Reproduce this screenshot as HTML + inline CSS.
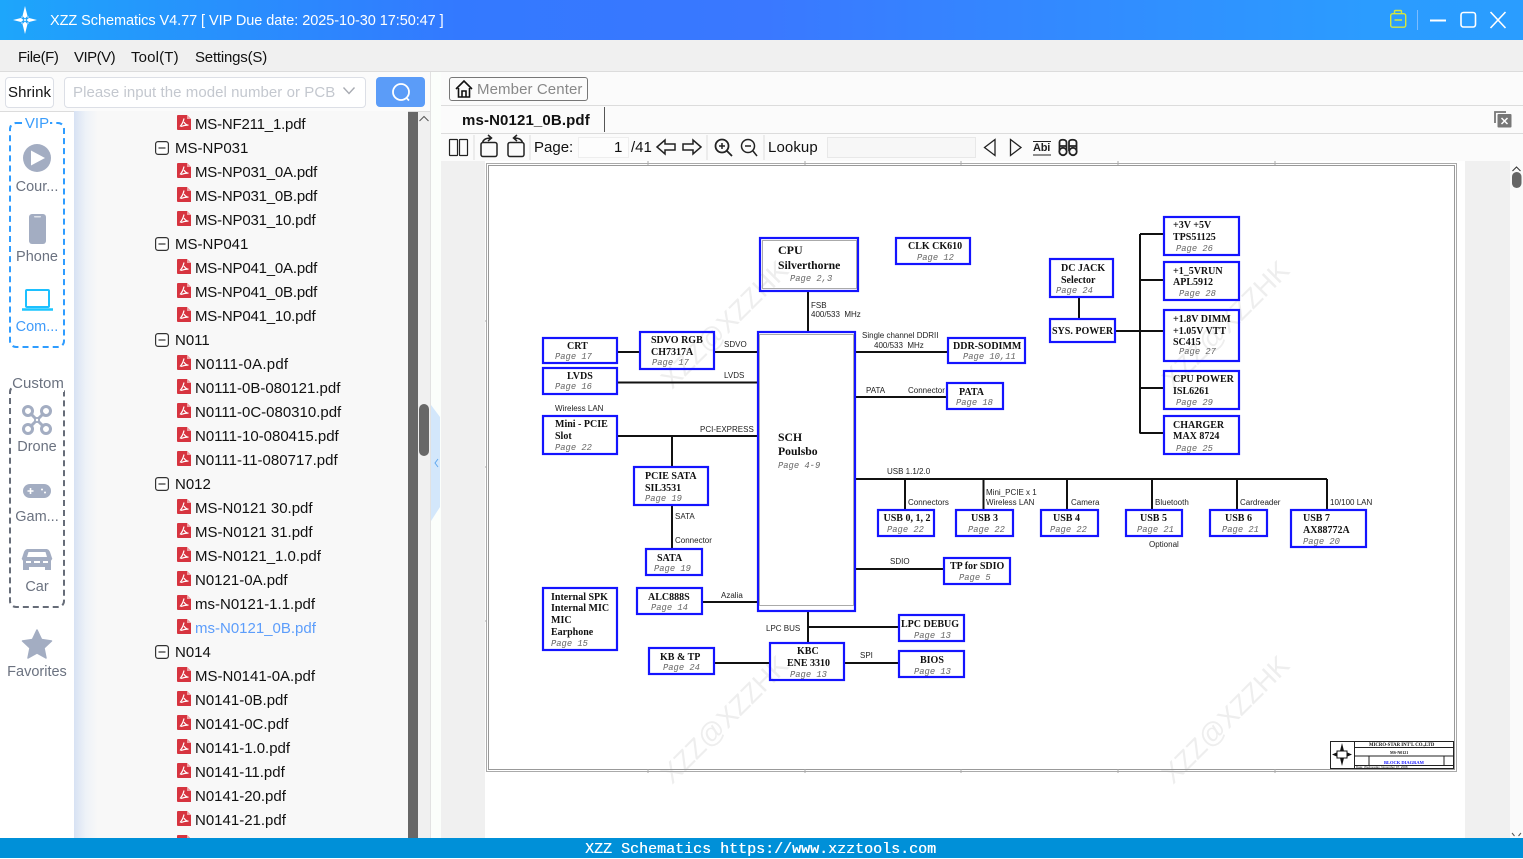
<!DOCTYPE html>
<html><head><meta charset="utf-8"><title>XZZ Schematics</title>
<style>
html,body{margin:0;padding:0;width:1523px;height:858px;overflow:hidden;background:#fff;font-family:"Liberation Sans","Noto Sans CJK SC",sans-serif;color:#111}
.a{position:absolute}
.t{position:absolute;white-space:nowrap;line-height:18px;font-size:15px}
.c{position:absolute;left:0;width:74px;text-align:center;font-size:14.5px;line-height:18px;color:#6b7280;white-space:nowrap}
#tree{position:absolute;left:74px;top:111px;width:334px;height:727px;overflow:hidden;background:linear-gradient(90deg,#d7e2f3 0,#eef2f8 12px,#f8f8f8 24px)}
#tree div{height:24px;line-height:27px;font-size:15px;white-space:nowrap;position:relative}
#tree .f{padding-left:121px}
#tree .d{padding-left:101px}
#tree .f svg{position:absolute;left:103px;top:4px}
#tree .d svg{position:absolute;left:81px;top:6px}
#tree .m{letter-spacing:-.2px}
#sch text{white-space:pre}
.b{font:bold 10px "Liberation Serif",serif;fill:#111}
.p{font:italic 8.8px "Liberation Mono",monospace;fill:#666}
.l{font:8px "Liberation Sans",sans-serif;fill:#222}
.w{font:27px "Liberation Sans",sans-serif;fill:#eeeeee}
</style></head><body>
<svg width="0" height="0" style="position:absolute"><defs>
<g id="pdf"><path d="M1 0H10L14 4V15H1a1 1 0 0 1-1-1V1a1 1 0 0 1 1-1Z" fill="#d6343f"/><path d="M10 0L14 4H10Z" fill="#f0a0a5"/><path d="M7 3.500C6.500 6 5.500 9 3 11.500M7 7C8 9 9.500 10 11.500 10.200C9.500 10 6.500 10.500 4 11.500" fill="none" stroke="#fff" stroke-width="1.200"/></g>
<g id="min"><rect x=".6" y=".6" width="12.800" height="12.800" rx="2.500" fill="#fff" stroke="#333" stroke-width="1.200"/><path d="M3.500 7H10.500" stroke="#333" stroke-width="1.200"/></g>
</defs></svg>

<!-- title bar -->
<div class="a" style="left:0;top:0;width:1523px;height:40px;background:linear-gradient(90deg,#1da6fb 0,#3379ff 30%,#3a78ff 50%,#2b9cff 90%,#2a9dff 100%)"></div>
<svg class="a" style="left:11px;top:6px" width="28" height="28" viewBox="0 0 28 28"><path d="M14 0L16.500 10L14 12.500L11.500 10Z M14 28L16.500 18L14 15.500L11.500 18Z M2 14L10 12L12.500 14L10 16Z M26 14L18 12L15.500 14L18 16Z" fill="#fff"/><circle cx="14" cy="14" r="1" fill="#fff"/><g fill="#cfe6ff"><circle cx="11" cy="11" r=".8"/><circle cx="17" cy="11" r=".8"/><circle cx="11" cy="17" r=".8"/><circle cx="17" cy="17" r=".8"/></g></svg>
<div class="t" style="left:50px;top:12px;color:#fff;font-size:14.5px;letter-spacing:-.06px">XZZ Schematics V4.77 [ VIP Due date: 2025-10-30 17:50:47 ]</div>
<svg class="a" style="left:1385px;top:5px" width="130" height="30" viewBox="0 0 130 30">
<rect x="5.700" y="8.700" width="15" height="13.500" rx="2" fill="none" stroke="#d5e83c" stroke-width="1.400"/><path d="M9.500 8.500V6.500a1 1 0 0 1 1-1h5a1 1 0 0 1 1 1V8.500M9.500 15H17" fill="none" stroke="#d5e83c" stroke-width="1.400"/>
<path d="M32.500 5V25" stroke="#7cbcff" stroke-width="1"/>
<path d="M45 15.500H61" stroke="#fff" stroke-width="2"/>
<rect x="76" y="7.500" width="14.500" height="14.500" rx="2.500" fill="none" stroke="#fff" stroke-width="1.600"/>
<path d="M105.500 7L120.500 23M120.500 7L105.500 23" stroke="#fff" stroke-width="1.600"/>
</svg>

<!-- menu -->
<div class="a" style="left:0;top:40px;width:1523px;height:31px;background:#f0f0f0;border-bottom:1px solid #dcdcdc"></div>
<div class="t" style="left:18px;top:49px;letter-spacing:-.4px">File(F)</div>
<div class="t" style="left:74px;top:49px;letter-spacing:-.5px">VIP(V)</div>
<div class="t" style="left:131px;top:49px;letter-spacing:.15px">Tool(T)</div>
<div class="t" style="left:195px;top:49px;letter-spacing:-.2px">Settings(S)</div>

<!-- search row -->
<div class="a" style="left:0;top:72px;width:430px;height:39px;background:#fbfbfb;border-bottom:1px solid #dcdcdc"></div>
<div class="a" style="left:5px;top:77px;width:47px;height:29px;border:1px solid #dcdfe6;border-radius:4px;background:#fff"></div>
<div class="t" style="left:8px;top:84px;letter-spacing:.1px">Shrink</div>
<div class="a" style="left:64px;top:77px;width:300px;height:29px;border:1px solid #dcdfe6;border-radius:4px;background:#fff"></div>
<div class="t" style="left:73px;top:84px;color:#c4c8cf;letter-spacing:.06px">Please input the model number or PCB</div>
<svg class="a" style="left:342px;top:86px" width="14" height="10" viewBox="0 0 14 10"><path d="M1.500 1.500L7 7.500L12.500 1.500" fill="none" stroke="#a8abb2" stroke-width="1.400"/></svg>
<div class="a" style="left:376px;top:77px;width:49px;height:30px;background:#5b9cf8;border-radius:4px"></div>
<svg class="a" style="left:388px;top:81px" width="26" height="24" viewBox="0 0 26 24"><circle cx="13" cy="11" r="8" fill="none" stroke="#fff" stroke-width="1.800"/><path d="M18.500 17L21 19.500" stroke="#fff" stroke-width="1.800"/></svg>

<!-- left nav -->
<div class="a" style="left:0;top:112px;width:74px;height:726px;background:#fff"></div>
<div class="a" style="left:9px;top:122px;width:52px;height:222px;border:2px dashed #2e9cff;border-radius:7px"></div>
<div class="c" style="top:115px;color:#3b9dfb"><span style="background:#fff;padding:0 1px;font-size:15px">VIP</span></div>
<svg class="a" style="left:10px;top:140px" width="54" height="180" viewBox="0 0 54 180">
<circle cx="27" cy="18" r="14" fill="#a3adc2"/><path d="M21 10.500L35 18L21 25.500Z" fill="#fff"/>
<rect x="19" y="74" width="17" height="30" rx="3" fill="#a3adc2"/><rect x="24" y="76" width="7" height="1.500" rx=".7" fill="#dfe3ea"/>
<rect x="16" y="150" width="23" height="17" rx="1" fill="none" stroke="#1cc0ff" stroke-width="2"/><path d="M12 169.500H43" stroke="#1cc6ff" stroke-width="2.500"/>
</svg>
<div class="c" style="top:178px">Cour...</div>
<div class="c" style="top:248px">Phone</div>
<div class="c" style="top:318px;color:#3f9bfa">Com...</div>

<div class="a" style="left:9px;top:385px;width:52px;height:219px;border:2px dashed #666c78;border-radius:7px"></div>
<div class="c" style="top:375px;left:1px;font-size:15px"><span style="background:#fff">Custom</span></div>
<svg class="a" style="left:10px;top:400px" width="54" height="270" viewBox="0 0 54 270">
<g fill="none" stroke="#a3adc2"><circle cx="18" cy="11" r="4.500" stroke-width="3"/><circle cx="36" cy="11" r="4.500" stroke-width="3"/><circle cx="18" cy="29" r="4.500" stroke-width="3"/><circle cx="36" cy="29" r="4.500" stroke-width="3"/><path d="M20 13L34 27M34 13L20 27" stroke-width="3"/></g><circle cx="27" cy="20" r="3" fill="#a3adc2"/><circle cx="27" cy="20" r="1.200" fill="#fff"/>
<rect x="13" y="84" width="28" height="14" rx="7" fill="#a3adc2"/><path d="M17.500 91H23.500M20.500 88V94" stroke="#fff" stroke-width="1.600"/><circle cx="32" cy="89.500" r="1" fill="#fff"/><circle cx="35" cy="92.500" r="1" fill="#fff"/>
<path d="M18 149H36C38 149 39 150 40 152L42 158C43 159 41 160 41 161V170H35V167H19V170H13V161C13 160 11 159 12 158L14 152C15 150 16 149 18 149Z" fill="#a3adc2"/><path d="M18.500 152H35.500L37 157H17Z" fill="#fff"/><rect x="16" y="161" width="5" height="2" fill="#fff"/><rect x="33" y="161" width="5" height="2" fill="#fff"/><rect x="24" y="161" width="6" height="2" fill="#fff"/>
<path d="M27 230L31.500 239.500L41.500 241L34 248L36 258L27 253L18 258L20 248L12.500 241L22.500 239.500Z" fill="#a3adc2" stroke="#a3adc2" stroke-width="1.500" stroke-linejoin="round"/>
</svg>
<div class="c" style="top:438px">Drone</div>
<div class="c" style="top:508px">Gam...</div>
<div class="c" style="top:578px">Car</div>
<div class="c" style="top:663px;left:0">Favorites</div>

<!-- tree -->
<div id="tree">
<div class="f m"><svg width="15" height="16"><use href="#pdf"/></svg>MS-NF211_1.pdf</div>
<div class="d"><svg width="14" height="14"><use href="#min"/></svg>MS-NP031</div>
<div class="f m"><svg width="15" height="16"><use href="#pdf"/></svg>MS-NP031_0A.pdf</div>
<div class="f m"><svg width="15" height="16"><use href="#pdf"/></svg>MS-NP031_0B.pdf</div>
<div class="f m"><svg width="15" height="16"><use href="#pdf"/></svg>MS-NP031_10.pdf</div>
<div class="d"><svg width="14" height="14"><use href="#min"/></svg>MS-NP041</div>
<div class="f m"><svg width="15" height="16"><use href="#pdf"/></svg>MS-NP041_0A.pdf</div>
<div class="f m"><svg width="15" height="16"><use href="#pdf"/></svg>MS-NP041_0B.pdf</div>
<div class="f m"><svg width="15" height="16"><use href="#pdf"/></svg>MS-NP041_10.pdf</div>
<div class="d"><svg width="14" height="14"><use href="#min"/></svg>N011</div>
<div class="f" style="letter-spacing:.25px"><svg width="15" height="16"><use href="#pdf"/></svg>N0111-0A.pdf</div>
<div class="f"><svg width="15" height="16"><use href="#pdf"/></svg>N0111-0B-080121.pdf</div>
<div class="f"><svg width="15" height="16"><use href="#pdf"/></svg>N0111-0C-080310.pdf</div>
<div class="f"><svg width="15" height="16"><use href="#pdf"/></svg>N0111-10-080415.pdf</div>
<div class="f"><svg width="15" height="16"><use href="#pdf"/></svg>N0111-11-080717.pdf</div>
<div class="d"><svg width="14" height="14"><use href="#min"/></svg>N012</div>
<div class="f"><svg width="15" height="16"><use href="#pdf"/></svg>MS-N0121 30.pdf</div>
<div class="f"><svg width="15" height="16"><use href="#pdf"/></svg>MS-N0121 31.pdf</div>
<div class="f"><svg width="15" height="16"><use href="#pdf"/></svg>MS-N0121_1.0.pdf</div>
<div class="f"><svg width="15" height="16"><use href="#pdf"/></svg>N0121-0A.pdf</div>
<div class="f"><svg width="15" height="16"><use href="#pdf"/></svg>ms-N0121-1.1.pdf</div>
<div class="f" style="color:#5c9dfb"><svg width="15" height="16"><use href="#pdf"/></svg>ms-N0121_0B.pdf</div>
<div class="d"><svg width="14" height="14"><use href="#min"/></svg>N014</div>
<div class="f"><svg width="15" height="16"><use href="#pdf"/></svg>MS-N0141-0A.pdf</div>
<div class="f"><svg width="15" height="16"><use href="#pdf"/></svg>N0141-0B.pdf</div>
<div class="f"><svg width="15" height="16"><use href="#pdf"/></svg>N0141-0C.pdf</div>
<div class="f"><svg width="15" height="16"><use href="#pdf"/></svg>N0141-1.0.pdf</div>
<div class="f"><svg width="15" height="16"><use href="#pdf"/></svg>N0141-11.pdf</div>
<div class="f"><svg width="15" height="16"><use href="#pdf"/></svg>N0141-20.pdf</div>
<div class="f"><svg width="15" height="16"><use href="#pdf"/></svg>N0141-21.pdf</div>
<div class="f"><svg width="15" height="16"><use href="#pdf"/></svg></div>
</div>
<div class="a" style="left:408px;top:112px;width:10px;height:726px;background:#676767"></div>
<div class="a" style="left:418px;top:112px;width:12px;height:726px;background:#f0f0f0"></div>
<div class="a" style="left:419px;top:404px;width:10px;height:52px;background:#676767;border-radius:5px"></div>
<svg class="a" style="left:418px;top:114px" width="12" height="10"><path d="M1.500 7L6 2.500L10.500 7" fill="none" stroke="#555" stroke-width="1"/></svg>
<div class="a" style="left:430px;top:72px;width:11px;height:766px;background:#fbfefb;border-left:1px solid #e2e2e2;box-sizing:border-box"></div>
<svg class="a" style="left:431px;top:405px" width="10" height="118" viewBox="0 0 10 118"><path d="M0 0L9 12V102L0 116Z" fill="#d3e7fb"/><path d="M7 54L4 58L7 62" fill="none" stroke="#62a9ef" stroke-width="1"/></svg>

<!-- right panel -->
<div class="a" style="left:441px;top:72px;width:1082px;height:33px;background:#fbfbfb;border-bottom:1px solid #dcdcdc"></div>
<div class="a" style="left:449px;top:77px;width:137px;height:22px;border:1px solid #777;border-radius:3px"></div>
<svg class="a" style="left:454px;top:79px" width="20" height="20" viewBox="0 0 20 20"><path d="M2 10L10 2L18 10M4.500 9V18H15.500V9M8 18V12H12V18" fill="none" stroke="#111" stroke-width="1.600"/></svg>
<div class="t" style="left:477px;top:81px;color:#888;font-size:15px;letter-spacing:.1px">Member Center</div>
<div class="a" style="left:441px;top:106px;width:1082px;height:27px;background:#fbfbfb;border-bottom:1px solid #dcdcdc"></div>
<div class="t" style="left:462px;top:112px;font-weight:bold;font-size:15px;color:#111;letter-spacing:.13px">ms-N0121_0B.pdf</div>
<div class="a" style="left:604px;top:107px;width:1px;height:25px;background:#555"></div>
<svg class="a" style="left:1492px;top:108px" width="22" height="22" viewBox="0 0 22 22"><path d="M3 15V4H14" fill="none" stroke="#777" stroke-width="1.800"/><rect x="5.500" y="6" width="14" height="13.500" rx="1" fill="#777"/><path d="M9.500 10L15.500 16M15.500 10L9.500 16" stroke="#fff" stroke-width="1.500"/></svg>

<!-- toolbar -->
<div class="a" style="left:441px;top:134px;width:1082px;height:27px;background:#fbfbfb"></div>
<svg class="a" style="left:441px;top:134px" width="650" height="27" viewBox="0 0 650 27" fill="none" stroke="#222" stroke-width="1.200">
<rect x="8.500" y="5.500" width="8" height="16" rx=".5"/><rect x="18.500" y="5.500" width="8" height="16" rx=".5"/>
<path d="M33 1V26M89 1V26M266 1V26M323 1V26" stroke="#ddd" stroke-width="1"/>
<g stroke-width="1.500"><rect x="40" y="8.500" width="16" height="14" rx="2"/><path d="M41.500 9C42 5.500 45 4 50 4M47 1L50.500 4L47 7" fill="none"/>
<rect x="67" y="8.500" width="16" height="14" rx="2"/><path d="M81.500 9C81 5.500 78 4 73 4M76 1L72.500 4L76 7" fill="none"/></g>
<path d="M216 13L224 6V10H234V16H224V20Z" stroke-width="1.500"/><path d="M260 13L252 6V10H242V16H252V20Z" stroke-width="1.500"/>
<g stroke-width="1.800"><circle cx="281" cy="12" r="6.500"/><path d="M286 17L291 22"/><path d="M278 12H284M281 9V15" stroke-width="1.500"/>
<circle cx="307" cy="12" r="6.500" stroke-width="1.500"/><path d="M312 17L316 22" stroke-width="1.500"/><path d="M304 12H310" stroke-width="1.500"/></g>
<path d="M554 5.500L543.500 13.500L554 21.500Z M569.500 5.500L580 13.500L569.500 21.500Z" stroke-width="1.300"/>
<path d="M592 21H610M592 7.500H610" stroke-width="1"/>
<g stroke-width="1.800"><path d="M618.500 17V8C618.500 5 625 5 625.500 8V17M628 17V8C628 5 635 5 635.500 8V17M618.500 12H625M628 12H635.500"/><circle cx="622" cy="17.500" r="3.700"/><circle cx="632" cy="17.500" r="3.700"/></g>
</svg>
<div class="t" style="left:1033px;top:142px;font-size:11px;line-height:13px;font-weight:bold;color:#222;letter-spacing:-.2px">Abi</div>
<div class="t" style="left:534px;top:139px">Page:</div>
<div class="a" style="left:578px;top:137px;width:49px;height:19px;border:1px solid #eee;background:#fdfdfd"></div>
<div class="t" style="left:614px;top:139px">1</div>
<div class="t" style="left:631px;top:139px">/41</div>
<div class="t" style="left:768px;top:139px;letter-spacing:.1px">Lookup</div>
<div class="a" style="left:827px;top:137px;width:147px;height:19px;border:1px solid #e8e8e8;background:#f7f7f7"></div>

<!-- doc area -->
<div class="a" style="left:441px;top:161px;width:1069px;height:677px;background:#f0f0f0"></div>
<div class="a" style="left:1510px;top:161px;width:13px;height:677px;background:#fafafa"></div>
<svg class="a" style="left:1510px;top:163px" width="13" height="28"><path d="M2.500 8L6.500 4L10.500 8" fill="none" stroke="#333" stroke-width="1"/><rect x="2" y="9" width="9.500" height="16" rx="4.700" fill="#666"/></svg>
<svg class="a" style="left:1510px;top:832px" width="13" height="6"><path d="M2 1L4.500 4M8.500 4L11 1" stroke="#555" stroke-width="1" fill="none"/></svg>
<div class="a" style="left:485px;top:161px;width:980px;height:677px;background:#fff"></div>

<svg id="sch" class="a" style="left:0;top:0" width="1523" height="838" viewBox="0 0 1523 838">
<g>
<text class="w" transform="translate(672,390) rotate(-45)">XZZ@XZZHK</text>
<text class="w" transform="translate(1173,390) rotate(-45)">XZZ@XZZHK</text>
<text class="w" transform="translate(672,785) rotate(-45)">XZZ@XZZHK</text>
<text class="w" transform="translate(1173,785) rotate(-45)">XZZ@XZZHK</text>
</g>
<g style="filter:blur(.35px)">
<rect x="486.500" y="163.500" width="970" height="608" fill="none" stroke="#aaa" stroke-width="1"/>
<rect x="488.500" y="165.500" width="966" height="604" fill="none" stroke="#999" stroke-width="1"/>
<path d="M648 161V165M805 161V165M961 161V165M1118 161V165M1275 161V165M648 769V773M805 769V773M961 769V773M1118 769V773M1275 769V773M486 320V322M486 466V468M486 620V622" stroke="#aaa" stroke-width="1"/>
<g stroke="#111" stroke-width="2" fill="none">
<path d="M808 292V331M618 352H639M715 352H757M618 382.500H757M618 436H757M672 436V466M672 506V548M856 352H947M856 397H947M856 479H1327M905 479V509M983.500 479V509M1067 479V509M1152 479V509M1237 479V509M1327 479V509M856 569H943M703 602H757M808 612V642M808 627H898M715 663H769M845 663H898M1079 298V318M1116 331H1164M1140 234V433.500M1140 234H1164M1140 280H1164M1140 388H1164M1140 433H1164"/>
</g>
<g fill="none" stroke="#1414ff" stroke-width="2.200">
<rect x="760" y="238" width="98" height="53"/><rect x="896" y="238" width="74" height="26"/><rect x="640" y="332" width="74" height="37"/><rect x="543" y="338" width="74" height="25"/><rect x="543" y="368" width="74" height="26"/><rect x="543" y="416" width="74" height="38"/><rect x="758" y="332" width="97" height="279"/><rect x="948" y="338" width="77" height="25"/><rect x="947" y="383" width="56" height="26"/><rect x="634" y="467" width="74" height="38"/><rect x="646" y="549" width="56" height="26"/><rect x="637" y="588" width="65" height="26"/><rect x="543" y="588" width="74" height="62"/><rect x="649" y="648" width="65" height="26"/><rect x="770" y="643" width="74" height="37"/><rect x="899" y="615" width="65" height="26"/><rect x="899" y="651" width="65" height="26"/><rect x="878" y="510" width="56" height="26"/><rect x="956" y="510" width="57" height="26"/><rect x="1041" y="510" width="57" height="26"/><rect x="1126" y="510" width="56" height="26"/><rect x="1210" y="510" width="57" height="26"/><rect x="1291" y="510" width="75" height="37"/><rect x="944" y="558" width="66" height="26"/><rect x="1050" y="259" width="63" height="38"/><rect x="1050" y="319" width="65" height="23"/><rect x="1164" y="217" width="75" height="38"/><rect x="1164" y="262" width="75" height="38"/><rect x="1164" y="310" width="75" height="51"/><rect x="1164" y="371" width="75" height="38"/><rect x="1164" y="416" width="75" height="38"/>
</g>
<rect x="762.500" y="240.500" width="94" height="48" fill="none" stroke="#aaa" stroke-width="1"/>
<rect x="759.500" y="334.500" width="94" height="271" fill="none" stroke="#aaa" stroke-width="1"/>

<text class="b" x="778" y="254" style="font-size:12px">CPU</text><text class="b" x="778" y="269" style="font-size:11.700px">Silverthorne</text><text class="p" x="790" y="281">Page 2,3</text>
<text class="b" x="908" y="249">CLK CK610</text><text class="p" x="917" y="260">Page 12</text>
<text class="l" x="811" y="308">FSB</text><text class="l" x="811" y="317">400/533  MHz</text>
<text class="b" x="651" y="343">SDVO RGB</text><text class="b" x="651" y="355">CH7317A</text><text class="p" x="652" y="365">Page 17</text>
<text class="b" x="567" y="349">CRT</text><text class="p" x="555" y="359">Page 17</text>
<text class="b" x="567" y="379">LVDS</text><text class="p" x="555" y="389">Page 16</text>
<text class="l" x="724" y="347">SDVO</text><text class="l" x="724" y="378">LVDS</text>
<text class="l" x="862" y="338">Single channel DDRII</text><text class="l" x="874" y="348">400/533  MHz</text>
<text class="b" x="953" y="349">DDR-SODIMM</text><text class="p" x="963" y="359">Page 10,11</text>
<text class="l" x="866" y="393">PATA</text><text class="l" x="908" y="393">Connector</text>
<text class="b" x="959" y="395">PATA</text><text class="p" x="956" y="405">Page 18</text>
<text class="l" x="555" y="411">Wireless LAN</text><text class="b" x="555" y="427">Mini - PCIE</text><text class="b" x="555" y="439">Slot</text><text class="p" x="555" y="450">Page 22</text>
<text class="l" x="700" y="432">PCI-EXPRESS</text>
<text class="b" x="778" y="441" style="font-size:11.700px">SCH</text><text class="b" x="778" y="455" style="font-size:11.700px">Poulsbo</text><text class="p" x="778" y="468">Page 4-9</text>

<text class="b" x="1173" y="228">+3V +5V</text><text class="b" x="1173" y="240">TPS51125</text><text class="p" x="1176" y="251">Page 26</text>
<text class="b" x="1173" y="274">+1_5VRUN</text><text class="b" x="1173" y="285">APL5912</text><text class="p" x="1179" y="296">Page 28</text>
<text class="b" x="1173" y="322">+1.8V DIMM</text><text class="b" x="1173" y="334">+1.05V VTT</text><text class="b" x="1173" y="345">SC415</text><text class="p" x="1179" y="354">Page 27</text>
<text class="b" x="1173" y="382">CPU POWER</text><text class="b" x="1173" y="394">ISL6261</text><text class="p" x="1176" y="405">Page 29</text>
<text class="b" x="1173" y="428">CHARGER</text><text class="b" x="1173" y="439">MAX 8724</text><text class="p" x="1176" y="451">Page 25</text>
<text class="b" x="1061" y="271">DC JACK</text><text class="b" x="1061" y="283">Selector</text><text class="p" x="1056" y="293">Page 24</text>
<text class="b" x="1052" y="334">SYS. POWER</text>

<text class="b" x="645" y="479">PCIE SATA</text><text class="b" x="645" y="491">SIL3531</text><text class="p" x="645" y="501">Page 19</text>
<text class="l" x="675" y="519">SATA</text><text class="l" x="675" y="543">Connector</text>
<text class="b" x="657" y="561">SATA</text><text class="p" x="654" y="571">Page 19</text>
<text class="b" x="648" y="600">ALC888S</text><text class="p" x="651" y="610">Page 14</text><text class="l" x="721" y="598">Azalia</text>
<text class="b" x="551" y="600">Internal SPK</text><text class="b" x="551" y="611">Internal MIC</text><text class="b" x="551" y="623">MIC</text><text class="b" x="551" y="635">Earphone</text><text class="p" x="551" y="646">Page 15</text>
<text class="l" x="766" y="631">LPC BUS</text>
<text class="b" x="901" y="627">LPC DEBUG</text><text class="p" x="914" y="638">Page 13</text>
<text class="b" x="660" y="660">KB &amp; TP</text><text class="p" x="663" y="670">Page 24</text>
<text class="b" x="797" y="654">KBC</text><text class="b" x="787" y="666">ENE 3310</text><text class="p" x="790" y="677">Page 13</text>
<text class="l" x="860" y="658">SPI</text>
<text class="b" x="920" y="663">BIOS</text><text class="p" x="914" y="674">Page 13</text>
<text class="l" x="887" y="474">USB 1.1/2.0</text><text class="l" x="890" y="564">SDIO</text>

<text class="l" x="908" y="505">Connectors</text><text class="l" x="986" y="495">Mini_PCIE x 1</text><text class="l" x="986" y="505">Wireless LAN</text><text class="l" x="1071" y="505">Camera</text><text class="l" x="1155" y="505">Bluetooth</text><text class="l" x="1240" y="505">Cardreader</text><text class="l" x="1330" y="505">10/100 LAN</text>
<text class="b" x="883.500" y="521">USB 0, 1, 2</text><text class="p" x="887" y="532">Page 22</text>
<text class="b" x="971" y="521">USB 3</text><text class="p" x="968" y="532">Page 22</text>
<text class="b" x="1053" y="521">USB 4</text><text class="p" x="1050" y="532">Page 22</text>
<text class="b" x="1140" y="521">USB 5</text><text class="p" x="1137" y="532">Page 21</text><text class="l" x="1149" y="547">Optional</text>
<text class="b" x="1225" y="521">USB 6</text><text class="p" x="1222" y="532">Page 21</text>
<text class="b" x="1303" y="521">USB 7</text><text class="b" x="1303" y="533">AX88772A</text><text class="p" x="1303" y="544">Page 20</text>
<text class="b" x="950" y="569">TP for SDIO</text><text class="p" x="959" y="580">Page 5</text>

<!-- title block -->
<g fill="none" stroke="#222" stroke-width="1"><rect x="1330.500" y="741.500" width="123" height="27"/><path d="M1354.500 741V768M1354 747.500H1454M1354 756H1454M1354 765.500H1454M1369 756V765M1444 756V765"/></g>
<path d="M1342 743L1344 751L1352 754.500L1344 758L1342 766L1340 758L1332 754.500L1340 751Z" fill="#111"/><rect x="1337" y="751" width="10" height="7" fill="#fff" stroke="#111" stroke-width="1"/>
<text class="b" x="1369" y="746" style="font-size:4.800px">MICRO-STAR INT'L CO.,LTD</text>
<text class="b" x="1390" y="754" style="font-size:4px">MS-N0121</text>
<text class="b" x="1384" y="764" style="font-size:4.500px;fill:#1414ff">BLOCK DIAGRAM</text>
<text class="l" x="1356" y="768" style="font-size:3px">Date: Wednesday, November 07, 2008</text>
</g>
</svg>

<!-- footer -->
<div class="a" style="left:0;top:838px;width:1523px;height:20px;background:#0090d8"></div>
<div class="t" style="left:585px;top:841px;color:#fff;font:15px/18px 'Liberation Mono',monospace;text-shadow:.3px 0 0 #fff">XZZ Schematics https://www.xzztools.com</div>
</body></html>
